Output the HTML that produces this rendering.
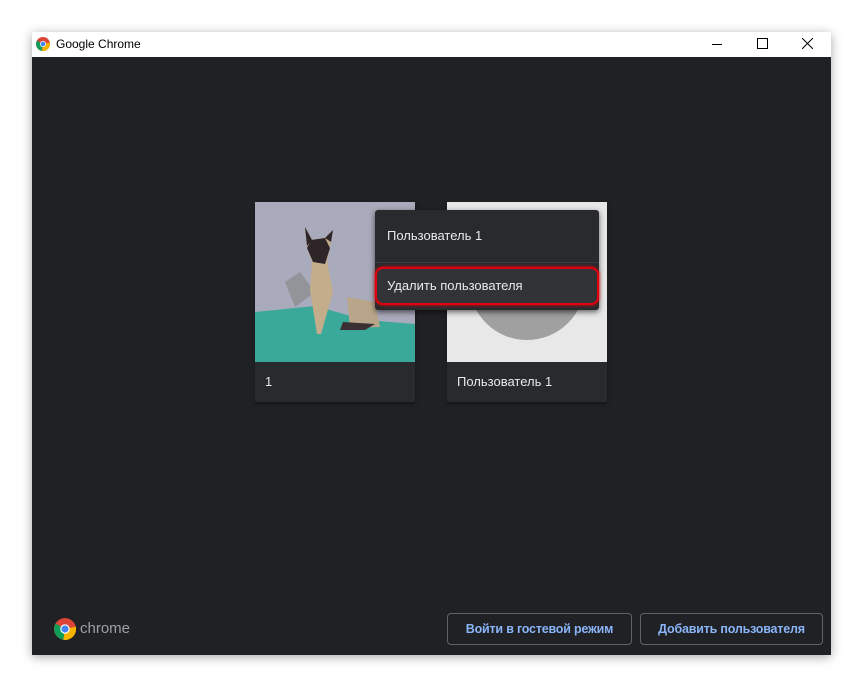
<!DOCTYPE html>
<html><head><meta charset="utf-8"><style>
body{margin:0;width:863px;height:687px;background:#fff;position:relative;overflow:hidden;font-family:"Liberation Sans",sans-serif}
.win{position:absolute;left:32px;top:32px;width:799px;height:623px;box-shadow:0 2px 10px rgba(0,0,0,.35);background:#202124}
.title{position:absolute;left:0;top:0;width:799px;height:25px;background:#fff;font-size:12px;color:#000}
.abs{position:absolute}
.card{position:absolute;top:170px;width:160px;height:200px;background:#292a2d;box-shadow:0 2px 4px rgba(0,0,0,.4)}
.lbl{position:absolute;left:10px;top:172px;font-size:13px;color:#e8eaed}
.menu{position:absolute;left:343px;top:178px;width:224px;height:100px;background:#292a2d;border-radius:3px;box-shadow:0 2px 6px rgba(0,0,0,.6);font-size:13px;color:#e8eaed}
.btn{position:absolute;top:581px;height:30px;border:1px solid #5f6368;border-radius:4px;color:#8ab4f8;font-size:12.5px;font-weight:bold;text-align:center;line-height:30px;letter-spacing:-0.2px}
</style></head><body>
<div class="win">
 <div class="title">
  <svg class="abs" style="left:4px;top:5px" width="14" height="14" viewBox="0 0 14 14"><circle cx="7" cy="7" r="7" fill="#db4437"/><path d="M7 7 L1 3.5 A7 7 0 0 0 6 13.9Z" fill="#0f9d58"/><path d="M7 7 L6 13.9 A7 7 0 0 0 13.9 5.5Z" fill="#f4b400"/><circle cx="7" cy="7" r="3" fill="#fff"/><circle cx="7" cy="7" r="2.3" fill="#4285f4"/></svg>
  <div class="abs" style="left:24px;top:5px">Google Chrome</div>
  <div class="abs" style="left:680px;top:12px;width:10px;height:1px;background:#000"></div>
  <div class="abs" style="left:725px;top:6px;width:9px;height:9px;border:1px solid #000"></div>
  <svg class="abs" style="left:770px;top:6px" width="11" height="11"><path d="M0 0L11 11M11 0L0 11" stroke="#000"/></svg>
 </div>
 <div class="card" style="left:223px">
  <svg width="160" height="160" style="position:absolute;left:0;top:0">
   <rect width="160" height="160" fill="#a9aabb"/>
   <path d="M0 110 L60 104 L110 118 L160 122 L160 160 L0 160Z" fill="#3aa99a"/>
   <path d="M30 80 L45 70 L60 90 L40 105Z" fill="#939499"/>
   <path d="M92 95 L120 100 L125 125 L95 126Z" fill="#b9a58a"/>
   <path d="M88 120 L120 122 L110 128 L85 128Z" fill="#3a3034"/>
   <path d="M50 25 L57 38 L70 36 L78 28 L75 45 L72 60 L78 90 L66 132 L62 132 L55 88 L57 60 L52 45Z" fill="#c4ad8a"/>
   <path d="M56 38 L70 36 L75 46 L70 62 L58 60 L52 46Z" fill="#2d2527"/>
   <path d="M50 25 L57 38 L52 44Z" fill="#2d2527"/><path d="M78 28 L70 36 L76 40Z" fill="#2d2527"/>
  </svg>
  <div class="lbl">1</div>
 </div>
 <div class="card" style="left:415px">
  <svg width="160" height="160" style="position:absolute;left:0;top:0"><rect width="160" height="160" fill="#e8e8e8"/><circle cx="80" cy="80" r="58" fill="#a0a0a0"/></svg>
  <div class="lbl">Пользователь 1</div>
 </div>
 <div class="menu">
  <div class="abs" style="left:12px;top:18px">Пользователь 1</div>
  <div class="abs" style="left:0;top:52px;width:224px;height:1px;background:#3c3d40"></div>
  <div class="abs" style="left:0;top:57px;width:220px;height:34px;border:2px solid #e0000f;border-radius:8px;background:#323336;box-shadow:0 0 3px #f00"></div>
  <div class="abs" style="left:12px;top:68px">Удалить пользователя</div>
 </div>
 <svg class="abs" style="left:22px;top:586px" width="22" height="22" viewBox="0 0 14 14"><circle cx="7" cy="7" r="7" fill="#db4437"/><path d="M7 7 L1 3.5 A7 7 0 0 0 6 13.9Z" fill="#0f9d58"/><path d="M7 7 L6 13.9 A7 7 0 0 0 13.9 5.5Z" fill="#f4b400"/><circle cx="7" cy="7" r="3" fill="#fff"/><circle cx="7" cy="7" r="2.3" fill="#4285f4"/></svg>
 <div class="abs" style="left:48px;top:588px;color:#9aa0a6;font-size:15px">chrome</div>
 <div class="btn" style="left:415px;width:183px">Войти в гостевой режим</div>
 <div class="btn" style="left:608px;width:181px">Добавить пользователя</div>
</div>
</body></html>
